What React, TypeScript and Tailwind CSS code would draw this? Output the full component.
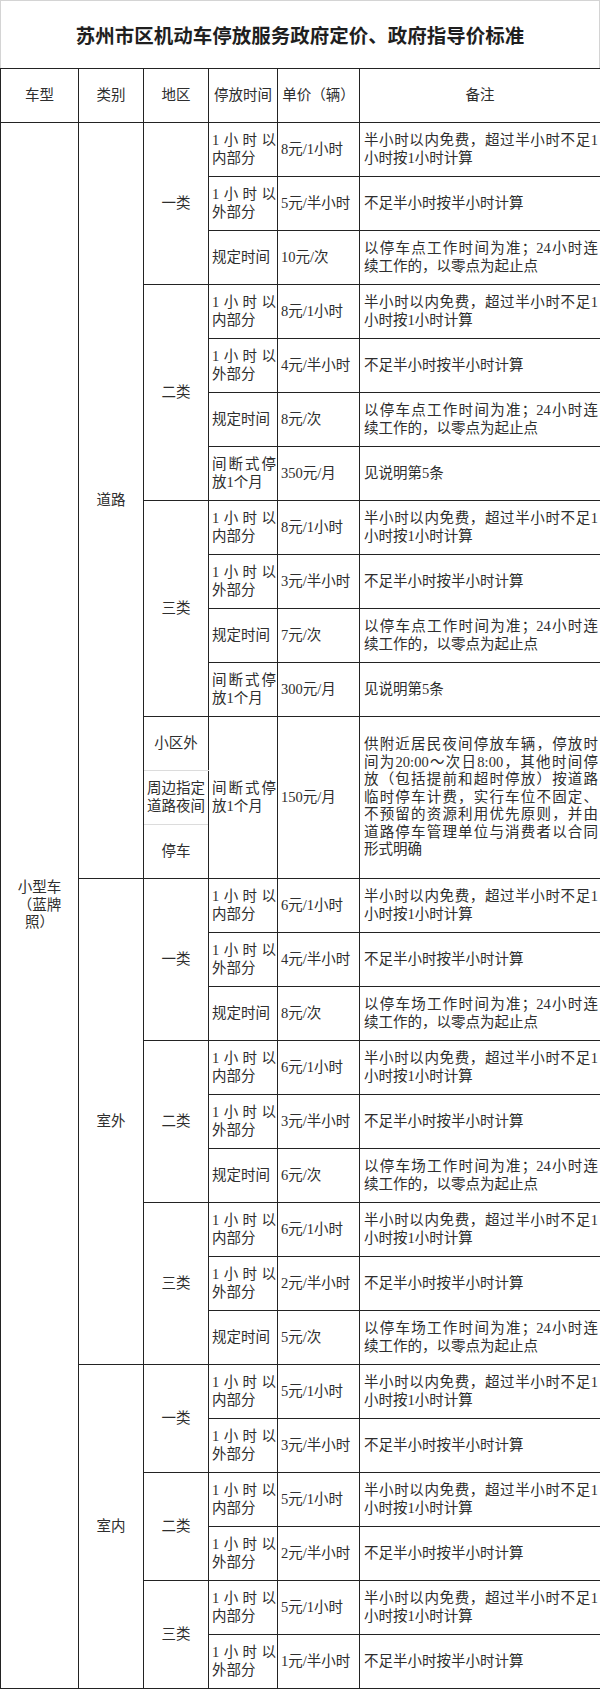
import React from "react";

type Item = { time: string[]; price: string; note: string[] };
type Tier = { name: string; items: Item[]; sub?: string[][] };
type Cat = { name: string; tiers: Tier[] };

const T_IN = ["1小时以", "内部分"];
const T_OUT = ["1小时以", "外部分"];
const T_FIX = ["规定时间"];
const T_MONTH = ["间断式停", "放1个月"];

const N_IN = ["半小时以内免费，超过半小时不足1", "小时按1小时计算"];
const N_OUT = ["不足半小时按半小时计算"];
const N_POINT = ["以停车点工作时间为准；24小时连", "续工作的，以零点为起止点"];
const N_LOT = ["以停车场工作时间为准；24小时连", "续工作的，以零点为起止点"];
const N_SEE = ["见说明第5条"];

const N_NIGHT = [
  "供附近居民夜间停放车辆，停放时",
  "间为20:00～次日8:00，其他时间停",
  "放（包括提前和超时停放）按道路",
  "临时停车计费，实行车位不固定、",
  "不预留的资源利用优先原则，并由",
  "道路停车管理单位与消费者以合同",
  "形式明确",
];

const cats: Cat[] = [
  {
    name: "道路",
    tiers: [
      {
        name: "一类",
        items: [
          { time: T_IN, price: "8元/1小时", note: N_IN },
          { time: T_OUT, price: "5元/半小时", note: N_OUT },
          { time: T_FIX, price: "10元/次", note: N_POINT },
        ],
      },
      {
        name: "二类",
        items: [
          { time: T_IN, price: "8元/1小时", note: N_IN },
          { time: T_OUT, price: "4元/半小时", note: N_OUT },
          { time: T_FIX, price: "8元/次", note: N_POINT },
          { time: T_MONTH, price: "350元/月", note: N_SEE },
        ],
      },
      {
        name: "三类",
        items: [
          { time: T_IN, price: "8元/1小时", note: N_IN },
          { time: T_OUT, price: "3元/半小时", note: N_OUT },
          { time: T_FIX, price: "7元/次", note: N_POINT },
          { time: T_MONTH, price: "300元/月", note: N_SEE },
        ],
      },
      {
        name: "",
        sub: [["小区外"], ["周边指定", "道路夜间"], ["停车"]],
        items: [{ time: T_MONTH, price: "150元/月", note: N_NIGHT }],
      },
    ],
  },
  {
    name: "室外",
    tiers: [
      {
        name: "一类",
        items: [
          { time: T_IN, price: "6元/1小时", note: N_IN },
          { time: T_OUT, price: "4元/半小时", note: N_OUT },
          { time: T_FIX, price: "8元/次", note: N_LOT },
        ],
      },
      {
        name: "二类",
        items: [
          { time: T_IN, price: "6元/1小时", note: N_IN },
          { time: T_OUT, price: "3元/半小时", note: N_OUT },
          { time: T_FIX, price: "6元/次", note: N_LOT },
        ],
      },
      {
        name: "三类",
        items: [
          { time: T_IN, price: "6元/1小时", note: N_IN },
          { time: T_OUT, price: "2元/半小时", note: N_OUT },
          { time: T_FIX, price: "5元/次", note: N_LOT },
        ],
      },
    ],
  },
  {
    name: "室内",
    tiers: [
      {
        name: "一类",
        items: [
          { time: T_IN, price: "5元/1小时", note: N_IN },
          { time: T_OUT, price: "3元/半小时", note: N_OUT },
        ],
      },
      {
        name: "二类",
        items: [
          { time: T_IN, price: "5元/1小时", note: N_IN },
          { time: T_OUT, price: "2元/半小时", note: N_OUT },
        ],
      },
      {
        name: "三类",
        items: [
          { time: T_IN, price: "5元/1小时", note: N_IN },
          { time: T_OUT, price: "1元/半小时", note: N_OUT },
        ],
      },
    ],
  },
];

// full lines are spread to the cell width, the last one stays left
function Lines({ lines, justify = false }: { lines: string[]; justify?: boolean }) {
  return (
    <div>
      {lines.map((l, i) => (
        <div key={i} className={justify && i < lines.length - 1 ? "[text-align-last:justify]" : ""}>
          {l}
        </div>
      ))}
    </div>
  );
}

const cell = "border border-[#232323] p-0 align-middle";

export default function App() {
  const rows: React.ReactNode[] = [];
  const span = (c: Cat) => c.tiers.reduce((t, r) => t + (r.sub ? r.sub.length : r.items.length), 0);
  const total = cats.reduce((s, c) => s + span(c), 0);
  let first = true;

  cats.forEach((cat) => {
    let catFirst = true;
    const catSpan = span(cat);

    const lead = () => (
      <>
        {first && (
          <td rowSpan={total} className={cell + " text-center"}>
            <Lines lines={["小型车", "（蓝牌", "照）"]} />
          </td>
        )}
        {catFirst && (
          <td rowSpan={catSpan} className={cell + " text-center"}>
            {cat.name}
          </td>
        )}
      </>
    );

    cat.tiers.forEach((tier) => {
      if (tier.sub) {
        const item = tier.items[0];
        const n = tier.sub.length;
        tier.sub.forEach((label, i) => {
          const light =
            (i > 0 ? " border-t-[#dcdcdc]" : "") + (i < n - 1 ? " border-b-[#dcdcdc]" : "");
          rows.push(
            <tr key={rows.length} className="h-[54px]">
              {lead()}
              <td className={cell + " text-center" + light}>
                <Lines lines={label} />
              </td>
              {i === 0 && (
                <>
                  <td rowSpan={n} className={cell + " pl-[3px] pr-[1px]"}>
                    <Lines lines={item.time} justify />
                  </td>
                  <td rowSpan={n} className={cell + " pl-[3px]"}>
                    {item.price}
                  </td>
                  <td rowSpan={n} className={cell + " pl-[4px] pr-[2px]"}>
                    <Lines lines={item.note} justify />
                  </td>
                </>
              )}
            </tr>
          );
          first = false;
          catFirst = false;
        });
      } else {
        tier.items.forEach((item, i) => {
          rows.push(
            <tr key={rows.length} className="h-[54px]">
              {lead()}
              {i === 0 && (
                <td rowSpan={tier.items.length} className={cell + " text-center"}>
                  {tier.name}
                </td>
              )}
              <td className={cell + " pl-[3px] pr-[1px]"}>
                <Lines lines={item.time} justify />
              </td>
              <td className={cell + " pl-[3px]"}>{item.price}</td>
              <td className={cell + " pl-[4px] pr-[2px]"}>
                <Lines lines={item.note} justify />
              </td>
            </tr>
          );
          first = false;
          catFirst = false;
        });
      }
    });
  });

  return (
    <div className="w-[600px] bg-white font-['Liberation_Serif','Noto_Sans_CJK_SC',serif] text-[14.5px] leading-[17.5px] text-[#2e2e2e]">
      <div className="flex h-[68px] items-center justify-center border border-b-0 border-[#d4d4d4] pt-[4px] text-[19.5px] font-bold text-[#1f1f1f]">
        苏州市区机动车停放服务政府定价、政府指导价标准
      </div>
      <table className="w-[600px] table-fixed border-collapse">
        <colgroup>
          <col className="w-[78px]" />
          <col className="w-[65px]" />
          <col className="w-[65px]" />
          <col className="w-[69px]" />
          <col className="w-[82px]" />
          <col className="w-[241px]" />
        </colgroup>
        <thead>
          <tr className="h-[54px]">
            {["车型", "类别", "地区", "停放时间", "单价（辆）", "备注"].map((h) => (
              <th key={h} className={cell + " text-center font-normal"}>
                {h}
              </th>
            ))}
          </tr>
        </thead>
        <tbody>{rows}</tbody>
      </table>
    </div>
  );
}
